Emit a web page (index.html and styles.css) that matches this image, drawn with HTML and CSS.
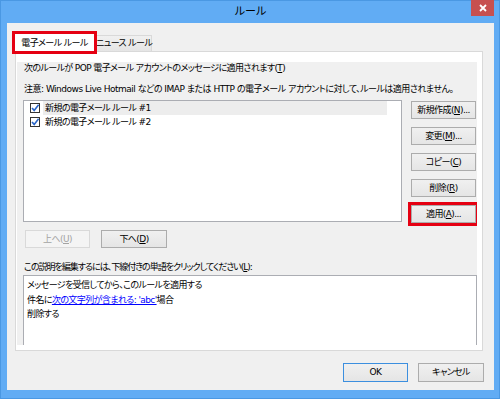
FILE: index.html
```html
<!DOCTYPE html>
<html>
<head>
    <meta charset="utf-8"/>
    <link rel="stylesheet" href="styles.css">
</head>
<body>
<div class="window">
    <div class="titlebar">
        <span></span>
        <span class="caption">ルール</span>
        <span class="close">
            <svg width="8" height="8" viewBox="0 0 8 8"><path d="M1 1L7 7M7 1L1 7" stroke="#fff" stroke-width="1.8" fill="none"/></svg>
        </span>
    </div>
    <div class="client">
        <div class="tabs">
            <div class="tab active">電子メール ルール</div>
            <div class="tab">ニュース ルール</div>
        </div>
        <div class="panel">
            <div class="page">
                <div class="label">次のルールが POP 電子メール アカウントのメッセージに適用されます(<u>T</u>)</div>
                <div class="label note">注意: Windows Live Hotmail などの IMAP または HTTP の電子メール アカウントに対して、ルールは適用されません。</div>
                <div class="rules">
                    <div class="listbox">
                        <div class="item">
                            <svg class="check" width="10" height="10" viewBox="0 0 10 10"><rect x="0.5" y="0.5" width="9" height="9" fill="#fff" stroke="#333"/><path d="M2 5L4.2 7.4L8.6 1.8" stroke="#2a66c9" stroke-width="1.6" fill="none"/></svg>
                            <span class="name selected">新規の電子メール ルール #1</span>
                        </div>
                        <div class="item">
                            <svg class="check" width="10" height="10" viewBox="0 0 10 10"><rect x="0.5" y="0.5" width="9" height="9" fill="#fff" stroke="#333"/><path d="M2 5L4.2 7.4L8.6 1.8" stroke="#2a66c9" stroke-width="1.6" fill="none"/></svg>
                            <span class="name">新規の電子メール ルール #2</span>
                        </div>
                    </div>
                    <div class="side-buttons">
                        <button>新規作成(<u>N</u>)...</button>
                        <button>変更(<u>M</u>)...</button>
                        <button>コピー(<u>C</u>)</button>
                        <button>削除(<u>R</u>)</button>
                        <button class="marked">適用(<u>A</u>)...</button>
                    </div>
                </div>
                <div class="move">
                    <button disabled>上へ(<u>U</u>)</button>
                    <button class="down">下へ(<u>D</u>)</button>
                </div>
                <div class="label edit-label">この説明を編集するには、下線付きの単語をクリックしてください(<u>L</u>):</div>
                <div class="description">
                    <div>メッセージを受信してから、このルールを適用する</div>
                    <div>件名に<a class="link">次の文字列が含まれる: 'abc'</a>場合</div>
                    <div>削除する</div>
                </div>
            </div>
        </div>
        <div class="dialog-buttons">
            <button class="default">OK</button>
            <button class="cancel">キャンセル</button>
        </div>
    </div>
</div>
</body>
</html>
```

FILE: styles.css
```css
body {
    margin: 0;
    font-family: "DejaVu Sans", "Noto Sans CJK JP", sans-serif;
    font-size: 9px;
    letter-spacing: -0.6px;
    font-feature-settings: "palt";
    color: #000;
}

.window {
    width: 500px;
    height: 399px;
    box-sizing: border-box;
    background: #61acf4;
    border: 1px solid #4a98e3;
    padding: 0 5px 8px 6px;
    display: flex;
    flex-direction: column;
}

.titlebar {
    height: 22px;
    display: grid;
    grid-template-columns: 1fr auto 1fr;
}

.titlebar .caption {
    padding-top: 4px;
    font-size: 11px;
    line-height: 14px;
    letter-spacing: 0;
}

.titlebar .close {
    justify-self: end;
    width: 23px;
    height: 16px;
    margin-top: -1px;
    background: #c75050;
    display: flex;
    align-items: center;
    justify-content: center;
}

.client {
    flex: 1;
    background: #f0f0f0;
    padding: 8px 11px 8px 8px;
    display: flex;
    flex-direction: column;
}

.tabs {
    display: flex;
    align-items: flex-end;
    height: 20px;
}

.tab {
    box-sizing: border-box;
    height: 16px;
    width: 57px;
    border: 1px solid #d9d9d9;
    border-bottom: none;
    background: linear-gradient(#f0f0f0, #e5e5e5);
    line-height: 15px;
    text-align: center;
    white-space: nowrap;
}

.tab.active {
    height: 19px;
    width: 81px;
    margin: 0 0 -1px -1px;
    background: #fff;
    line-height: 18px;
    position: relative;
    z-index: 1;
    outline: 3px solid #e50012;
    outline-offset: -1px;
}

.panel {
    height: 300px;
    box-sizing: border-box;
    border: 1px solid #d9d9d9;
    background: #fff;
    padding: 10px 5px 5px 1px;
    margin-bottom: 12px;
}

.page {
    height: 100%;
    background: #f0f0f0;
    overflow: hidden;
    display: flex;
    flex-direction: column;
}

.label {
    line-height: 13px;
    margin-left: 7px;
    white-space: nowrap;
}

.note {
    margin-top: 8px;
    letter-spacing: -0.5px;
}

.rules {
    display: flex;
    margin: 4px 0 0 6px;
}

.listbox {
    width: 379px;
    height: 122px;
    box-sizing: border-box;
    border: 1px solid #abadb3;
    background: #fff;
}

.listbox .item {
    display: flex;
    align-items: center;
    height: 14px;
    padding-left: 6px;
}

.listbox .check {
    margin-right: 3px;
}

.listbox .name {
    width: 344px;
    box-sizing: border-box;
    padding-left: 2px;
    line-height: 14px;
    white-space: nowrap;
}

.listbox .name.selected {
    background: #ededed;
}

button {
    font: inherit;
    letter-spacing: inherit;
    font-feature-settings: "palt";
    color: #000;
    padding: 0;
    height: 18px;
    width: 65px;
    box-sizing: border-box;
    border: 1px solid #acacac;
    background: linear-gradient(#f0f0f0, #e5e5e5);
    line-height: 16px;
    white-space: nowrap;
}

button:disabled {
    border-color: #d9d9d9;
    background: #f4f4f4;
    color: #a3a3a3;
}

.side-buttons {
    display: flex;
    flex-direction: column;
    gap: 8px;
    margin-left: 9px;
    padding-top: 1px;
}

.side-buttons .marked {
    outline: 3px solid #e50012;
}

.move {
    display: flex;
    gap: 11px;
    margin: 7px 0 0 8px;
}

.move .down {
    width: 66px;
}

.edit-label {
    margin-top: 13px;
    letter-spacing: -1px;
}

.description {
    flex: none;
    height: 80px;
    margin: 1px 0 0 6px;
    border: 1px solid #abadb3;
    background: #fff;
    padding: 2px 3px;
    line-height: 14.5px;
}

.description .link {
    color: #0000ff;
    text-decoration: underline;
}

.dialog-buttons {
    display: flex;
    justify-content: flex-end;
    gap: 10px;
    margin-right: -1px;
}

.dialog-buttons button {
    height: 19px;
    line-height: 17px;
}

.dialog-buttons .default {
    border-color: #3c8fdf;
}

.dialog-buttons .cancel {
    width: 66px;
}
```
